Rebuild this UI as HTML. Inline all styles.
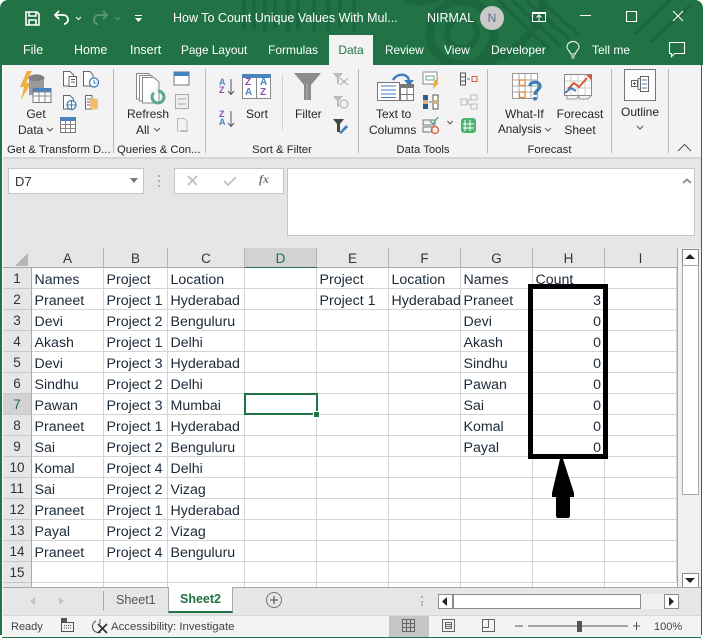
<!DOCTYPE html>
<html><head><meta charset="utf-8">
<style>
html,body{margin:0;padding:0;background:#fff}
#w{position:relative;width:703px;height:640px;overflow:hidden;font-family:"Liberation Sans",sans-serif;color:#262626;background:#fff}
#w>div,#w>svg,#w>table{position:absolute}
.t{white-space:nowrap;font-size:12px;line-height:16px}
.c{text-align:center}
.g{font-size:11.300px;top:142px}
.tab{color:#fff;font-size:12px;top:42px;line-height:16px;white-space:nowrap}
.h{top:248px;height:19px;line-height:21px;font-size:13.500px;text-align:center;color:#333;background:#e6e6e6;border-right:1px solid #b4b4b4;box-sizing:content-box}
.rn{left:3px;width:28px;height:20px;line-height:22px;text-align:center;font-size:13.500px;color:#333;background:#e6e6e6;border-bottom:1px solid #c8c8c8;border-right:1px solid #a8a8a8}
table{border-collapse:separate;border-spacing:0;table-layout:fixed;font-size:14.200px;color:#1c2a38}
td{height:21px;box-sizing:border-box;vertical-align:top;padding:4px 0 0 2.500px;border-right:1px solid #d4d4d4;border-bottom:1px solid #d4d4d4;white-space:nowrap;overflow:hidden;line-height:16px}
td.r{text-align:right;padding:4px 3px 0 0}
</style></head><body>
<div id="w">
<!-- title bar -->
<div style="left:0;top:0;width:703px;height:66px;background:#217346;border-radius:8px 8px 0 0"></div>
<svg style="left:230px;top:0" width="473" height="66" viewBox="0 0 473 66" fill="none" stroke="#1d6740">
<g stroke-width="4"><path d="M14 0V30M24 0V30M35 0V32M45 0V28M58 0V32M68 0V30M84 0L84 32M98 0V30M110 0V26M124 0V32"/></g>
<path d="M172 0a24 14 0 0 0 38 0" fill="#1d6740" stroke="none"/>
<circle cx="232" cy="33" r="15" stroke-width="6"/><circle cx="232" cy="33" r="32" stroke-width="9"/>
<path d="M222 66C262 66 304 50 314 0" stroke-width="8"/>
<path d="M268 0L320 50M282 0L330 46M296 0L340 40M310 0L350 36M405 34L440 0M420 42L460 6" stroke-width="4"/>
</svg>
<svg style="left:25px;top:11px" width="15" height="15" viewBox="0 0 15 15" fill="none" stroke="#fff" stroke-width="1.600"><path d="M1 1H12L14 3V14H1ZM4 1V5H11V1M4 14V9H11V14"/></svg>
<svg style="left:53px;top:10px" width="30" height="16" viewBox="0 0 30 16" fill="none" stroke="#fff" stroke-width="1.800"><path d="M6 1L2 5L6 9M2 5H10C14 5 15 8 15 10C15 12 13 14 11 14"/><path d="M23 7L25.500 9.500L28 7" stroke-width="1"/></svg>
<svg style="left:92px;top:10px" width="30" height="16" viewBox="0 0 30 16" fill="none" stroke="#5b9a78" stroke-width="1.800"><path d="M11 1L15 5L11 9M15 5H7C3 5 2 8 2 10C2 12 4 14 6 14"/><path d="M23 7L25.500 9.500L28 7" stroke-width="1"/></svg>
<svg style="left:134px;top:14px" width="10" height="10" viewBox="0 0 10 10" fill="#fff"><rect x="1" y="1" width="7" height="1"/><path d="M1 4H8L4.500 8Z"/></svg>
<div class="t" style="left:173px;top:10px;color:#fff;font-size:12.500px">How To Count Unique Values With Mul...</div>
<div class="t" style="left:427px;top:10px;color:#fff;font-size:12.500px">NIRMAL</div>
<div class="c" style="left:480px;top:6px;width:24px;height:24px;border-radius:12px;background:#c9c9c9;color:#5d6a8a;font-size:12px;line-height:24px">N</div>
<svg style="left:531px;top:10px" width="16" height="14" viewBox="0 0 16 14" fill="none" stroke="#fff"><path d="M1.500 2.500H14.500V11.500H1.500ZM1.500 3.500H14.500M8 11V5.500M5.500 7.500L8 5L10.500 7.500"/></svg>
<svg style="left:580px;top:8px" width="115" height="16" viewBox="0 0 115 16" fill="none" stroke="#fff" stroke-width="1.100"><path d="M0 7.500H11M46.500 3.500H56.500V13.500H46.500ZM93 3L103 13M103 3L93 13"/></svg>
<!-- tabs -->
<div class="tab" style="left:23px;font-size:12.500px">File</div>
<div class="tab" style="left:74px;font-size:12.500px">Home</div>
<div class="tab" style="left:130px;font-size:12.500px">Insert</div>
<div class="tab" style="left:181px;font-size:11.800px">Page Layout</div>
<div class="tab" style="left:268px">Formulas</div>
<div class="c" style="left:329px;top:35px;width:44px;height:31px;background:#f3f3f3;color:#217346;font-size:12px;line-height:31px">Data</div>
<div class="tab" style="left:385px;font-size:11.800px">Review</div>
<div class="tab" style="left:444px">View</div>
<div class="tab" style="left:491px">Developer</div>
<svg style="left:566px;top:41px" width="14" height="19" viewBox="0 0 14 19" fill="none" stroke="#fff"><path d="M4.500 13C4.500 10 1 9 1 6A6 5.500 0 0 1 13 6C13 9 9.500 10 9.500 13ZM5 15H9M5.500 17H8.500"/></svg>
<div class="tab" style="left:592px">Tell me</div>
<svg style="left:668px;top:41px" width="18" height="18" viewBox="0 0 18 18" fill="none" stroke="#fff" stroke-width="1.100"><path d="M1.500 1.500H16.500V12.500H6.500L3.500 15.500V12.500H1.500Z"/></svg>
<!-- ribbon -->
<div style="left:3px;top:65px;width:698px;height:92px;background:#f3f3f3;border-bottom:2px solid #d6d6d6"></div>
<div style="left:3px;top:159px;width:698px;height:89px;background:#e6e6e6"></div>
<!-- ribbon separators -->
<div style="left:113px;top:69px;width:1px;height:84px;background:#b8b8b8"></div>
<div style="left:205px;top:69px;width:1px;height:84px;background:#b8b8b8"></div>
<div style="left:282px;top:75px;width:1px;height:55px;background:#d0d0d0"></div>
<div style="left:358px;top:69px;width:1px;height:84px;background:#b8b8b8"></div>
<div style="left:487px;top:69px;width:1px;height:84px;background:#b8b8b8"></div>
<div style="left:611px;top:69px;width:1px;height:84px;background:#b8b8b8"></div>
<div style="left:668px;top:69px;width:1px;height:84px;background:#b8b8b8"></div>
<!-- Get data icons -->
<svg style="left:18px;top:69px" width="62" height="66" viewBox="0 0 62 66">
<path d="M9 2H14L8 14H13L3 31L6 18H2Z" fill="#f0b040"/>
<path d="M11 9C11 4 26 4 26 9V26H11Z" fill="#9a9a9a"/><ellipse cx="18.500" cy="9" rx="8" ry="3" fill="#808080"/>
<rect x="15" y="19.500" width="18" height="14" fill="#fff" stroke="#777"/><rect x="15" y="19" width="18" height="3.500" fill="#4a82bd"/>
<path d="M15 27H33M15 23H33M21 23V33M27 23V33" stroke="#888" fill="none"/>
<g transform="translate(42,48)"><rect x=".5" y=".5" width="15" height="15" fill="#fff" stroke="#777"/><rect width="16" height="4" fill="#4a82bd"/><path d="M0 7.500H15M0 11.500H15M5.500 4V15M10.500 4V15" stroke="#888" fill="none"/></g>
</svg>
<svg style="left:61px;top:70px" width="50" height="42" viewBox="0 0 50 42" fill="none" stroke="#666">
<path d="M2.500 1.500H9L12.500 5V16H2.500Z" fill="#fff"/><path d="M8 6.500H15.500V16.500H8ZM10 9.500H14M10 12H14" fill="#fff"/>
<path d="M22.500 1.500H29L32 5V16H22.500Z" fill="#fff"/><circle cx="33" cy="12.500" r="4.500" fill="#fff" stroke="#3d7fbd" stroke-width="1.300"/><path d="M33 10V13H35.500" stroke="#3d7fbd"/>
<path d="M2.500 25.500H9L12.500 29V39H2.500Z" fill="#fff"/><circle cx="10.500" cy="35" r="4.500" fill="#fff" stroke="#3d7fbd" stroke-width="1.300"/><path d="M6 35H15M10.500 31V39" stroke="#3d7fbd"/>
<path d="M24.500 25.500H31V39H24.500ZM26 29H30M26 32H30M26 35H30" fill="#fff"/><path d="M29 30C29 28 37 28 37 30V38C37 40 29 40 29 38Z" fill="#efc070" stroke="none"/>
</svg>
<div class="t c" style="left:18px;top:106px;width:36px">Get</div>
<div class="t" style="left:18px;top:122px">Data</div>
<svg style="left:46px;top:127px" width="8" height="6" fill="none" stroke="#555"><path d="M1 1L4 4L7 1"/></svg>
<div class="t g" style="left:7px">Get &amp; Transform D...</div>
<!-- Refresh -->
<svg style="left:134px;top:71px" width="60" height="70" viewBox="0 0 60 70" fill="none" stroke="#888">
<path d="M2.500 2.500H15V28H2.500Z" fill="#fff"/><path d="M5.500 4.500H18V30H5.500Z" fill="#fff"/><path d="M8.500 6.500H20L25 11V32H8.500Z" fill="#fff"/>
<circle cx="24" cy="26" r="6" stroke="#5aa88a" stroke-width="3"/><path d="M16 20L24 14V24Z" fill="#f3f3f3" stroke="none"/>
<rect x="40" y="1" width="15" height="13" fill="#fff" stroke="#777"/><rect x="40" y="1" width="15" height="4" fill="#4a82bd" stroke="none"/>
<rect x="41.500" y="23.500" width="13" height="14" fill="#eee" stroke="#aaa"/><path d="M44 28H52M44 33H52" stroke="#aaa"/>
<path d="M43.500 47.500H50L53 50V60H43.500Z" stroke="#bbb"/><path d="M47 60H54" stroke="#bbb" stroke-width="2"/>
</svg>
<div class="t c" style="left:125px;top:106px;width:46px">Refresh</div>
<div class="t" style="left:136px;top:122px">All</div>
<svg style="left:153px;top:127px" width="8" height="6" fill="none" stroke="#555"><path d="M1 1L4 4L7 1"/></svg>
<div class="t g" style="left:117px">Queries &amp; Con...</div>
<!-- Sort -->
<div class="t" style="left:219px;top:78px;font-size:9px;line-height:8px;font-weight:bold;color:#4a82bd">A<br><span style="color:#8a4fb0">Z</span></div>
<div class="t" style="left:219px;top:110px;font-size:9px;line-height:8px;font-weight:bold;color:#8a4fb0">Z<br><span style="color:#4a82bd">A</span></div>
<svg style="left:227px;top:79px" width="8" height="48" fill="none" stroke="#555"><path d="M4 0V15M1 12L4 15.500L7 12M4 32V47M1 44L4 47.500L7 44"/></svg>
<svg style="left:242px;top:74px" width="29" height="25" viewBox="0 0 29 25"><rect x=".5" y=".5" width="28" height="24" fill="#fff" stroke="#888"/><rect width="29" height="4" fill="#4a82bd"/><path d="M14.500 4V25" stroke="#888"/></svg>
<div class="t" style="left:245px;top:78px;font-size:10px;line-height:10px;font-weight:bold;color:#8a4fb0">Z<br><span style="color:#4a82bd">A</span></div>
<div class="t" style="left:260px;top:78px;font-size:10px;line-height:10px;font-weight:bold;color:#4a82bd">A<br><span style="color:#8a4fb0">Z</span></div>
<div class="t" style="left:246px;top:106px">Sort</div>
<svg style="left:293px;top:72px" width="30" height="29" viewBox="0 0 30 29"><path d="M1 1H28L18 13V28H11V13Z" fill="#8c8c8c"/><path d="M14 12V28" stroke="#b5b5b5" fill="none"/></svg>
<div class="t" style="left:295px;top:106px">Filter</div>
<svg style="left:332px;top:70px" width="18" height="66" viewBox="0 0 18 66" fill="none"><path d="M1 3H11L7 8V14H5V8Z" fill="#bbb"/><path d="M8 8L16 15M16 8L8 15" stroke="#aaa"/><path d="M1 26H11L7 31V37H5V31Z" fill="#bbb"/><circle cx="12" cy="34" r="4" stroke="#aaa"/><path d="M1 49H12L8 54V62H5V54Z" fill="#444"/><path d="M7 63L14 55L16 57L9 64Z" fill="#3d7fbd"/></svg>
<div class="t c g" style="left:206px;width:152px">Sort &amp; Filter</div>
<!-- Data tools -->
<svg style="left:377px;top:72px" width="46" height="30" viewBox="0 0 46 30" fill="none">
<path d="M16 8C20 1 30 1 32 8" stroke="#3d7fbd" stroke-width="2.500"/><path d="M27 8H37L32 14Z" fill="#3d7fbd"/>
<rect x=".5" y="10.500" width="22" height="18" fill="#fff" stroke="#777"/><path d="M4 14H19M4 18H19M4 22H19M4 25.500H19" stroke="#3d7fbd"/>
<rect x="23.500" y="12.500" width="13" height="16" fill="#fff" stroke="#777"/><rect x="23" y="12" width="14" height="4" fill="#777"/><path d="M24 22.500H36M30 16V28" stroke="#777"/>
</svg>
<div class="t" style="left:376px;top:106px">Text to</div>
<div class="t" style="left:369px;top:122px">Columns</div>
<svg style="left:422px;top:71px" width="66" height="66" viewBox="0 0 66 66" fill="none">
<rect x="1" y="1" width="14" height="12" stroke="#888" fill="#fff"/><rect x="4" y="5" width="8" height="4" stroke="#5aa88a"/><path d="M12 10L17 6L14 12L17 12L11 18Z" fill="#f0b040"/>
<rect x="1" y="24" width="5" height="14" fill="#2e5d8e"/><rect x="11" y="24" width="5" height="14" stroke="#555" fill="#fff"/><rect x="1" y="29" width="5" height="4" fill="#dcb274"/><rect x="11" y="29" width="5" height="4" fill="#dcb274"/><path d="M7 31H10" stroke="#3d7fbd"/>
<rect x="1" y="49" width="12" height="5" stroke="#777"/><rect x="1" y="56" width="9" height="5" stroke="#777"/><path d="M8 50L11 53L16 46" stroke="#5aa88a" stroke-width="1.500"/><circle cx="13" cy="59" r="3.500" stroke="#d9583a" stroke-width="1.300"/>
<path d="M25.500 50L28 53L30.500 50" stroke="#555"/>
<rect x="38.500" y="2" width="5" height="12" stroke="#555"/><path d="M39 6H43M39 10H43" stroke="#555"/><path d="M45 8H48" stroke="#3d7fbd"/><rect x="50" y="5.500" width="5" height="5" stroke="#d9583a"/>
<rect x="39" y="28" width="6" height="6" stroke="#bbb"/><rect x="49" y="24" width="6" height="5" stroke="#bbb"/><rect x="49" y="33" width="6" height="5" stroke="#bbb"/><path d="M45 31L49 27M45 31L49 35" stroke="#bbb"/>
<rect x="39" y="47" width="15" height="15" rx="3" fill="#4db36e"/><path d="M43 49V60M48 49V60M41 53H52M41 57H52" stroke="#fff"/>
</svg>
<div class="t c g" style="left:359px;width:128px">Data Tools</div>
<!-- Forecast -->
<svg style="left:512px;top:73px" width="32" height="32" viewBox="0 0 32 32" fill="none">
<rect x=".5" y=".5" width="25" height="25" stroke="#999" fill="#fff"/><path d="M7 1V25M13 1V25M19 1V25M1 7H25M1 13H25M1 19H25" stroke="#aaa"/>
<rect x="7.500" y="7" width="5.500" height="5.500" stroke="#e08a3c" stroke-width="1.300" fill="#fff"/><rect x="7.500" y="19" width="5.500" height="5.500" stroke="#e08a3c" stroke-width="1.300" fill="#fff"/>
<path d="M18 13C18 8 28 8 28 13C28 17 23 17 23 22" stroke="#3d7fbd" stroke-width="3.200"/><rect x="21.300" y="24" width="3.500" height="3.500" fill="#3d7fbd"/>
</svg>
<svg style="left:564px;top:74px" width="30" height="26" viewBox="0 0 30 26" fill="none">
<rect x=".5" y=".5" width="27" height="21" stroke="#888" fill="#fff"/><path d="M7 1V21M14 1V21M21 1V21M1 7H27M1 14H27" stroke="#ccc"/>
<path d="M2 16L8 10L13 14L21 5" stroke="#d9583a" stroke-width="2" transform="translate(2,-1)"/><path d="M1 19L7 14L12 17" stroke="#3d7fbd" stroke-width="2"/><path d="M22 1H28V7Z" fill="#d9583a"/>
<path d="M3 22V25H12L15 22M15 22V25H24L27 22" stroke="#999"/>
</svg>
<div class="t" style="left:505px;top:106px">What-If</div>
<div class="t" style="left:498px;top:122px;font-size:11.700px">Analysis</div>
<svg style="left:544px;top:127px" width="8" height="6" fill="none" stroke="#555"><path d="M1 1L4 4L7 1"/></svg>
<div class="t c" style="left:554px;top:106px;width:52px">Forecast</div>
<div class="t c" style="left:554px;top:122px;width:52px">Sheet</div>
<div class="t c g" style="left:488px;width:123px">Forecast</div>
<!-- Outline -->
<div style="left:624px;top:69px;width:30px;height:30px;background:#fcfcfc;border:1px solid #777"></div>
<svg style="left:631px;top:76px" width="18" height="16" viewBox="0 0 18 16" fill="none" stroke="#666"><rect x=".5" y="4.500" width="6" height="6"/><path d="M2 7.500H5M3.500 6V9M7 2.500H9M7 13.500H9M7 2.500V13.500"/><rect x="9.500" y=".5" width="8" height="15" stroke="#666"/><path d="M11 4H16M11 8H16M11 12H16" stroke="#3d7fbd"/></svg>
<div class="t c" style="left:612px;top:104px;width:56px">Outline</div>
<svg style="left:636px;top:125px" width="8" height="6" fill="none" stroke="#555"><path d="M1 1L4 4L7 1"/></svg>
<svg style="left:677px;top:143px" width="16" height="10" fill="none" stroke="#555"><path d="M1 8L7.500 1.500L14 8"/></svg>
<!-- formula bar -->
<div style="left:8px;top:168px;width:134px;height:24px;background:#fff;border:1px solid #c6c6c6;font-size:13px;line-height:25px;text-indent:6px;color:#333">D7</div>
<svg style="left:129px;top:178px" width="10" height="6"><path d="M1 0H9L5 5Z" fill="#777"/></svg>
<div style="left:158px;top:175px;width:2px;height:2px;background:#b0b0b0;box-shadow:0 5px #b0b0b0,0 10px #b0b0b0"></div>
<div style="left:174px;top:168px;width:108px;height:24px;background:#fff;border:1px solid #c6c6c6"></div>
<svg style="left:186px;top:175px" width="50" height="12" fill="none" stroke="#c0c0c0" stroke-width="1.800"><path d="M2 1L11 10M11 1L2 10M38 6L42 10L50 2"/></svg>
<div style="left:259px;top:172px;font:italic bold 12px 'Liberation Serif',serif;color:#777">fx</div>
<div style="left:287px;top:168px;width:406px;height:66px;background:#fff;border:1px solid #c6c6c6"></div>
<svg style="left:682px;top:178px" width="10" height="6" fill="none" stroke="#888" stroke-width="1.800"><path d="M1 5L5 1.500L9 5"/></svg>
<!-- grid -->
<div style="left:3px;top:248px;width:678px;height:340px;background:#fff"></div>
<div style="left:3px;top:247px;width:674px;height:20px;background:#e6e6e6;border-bottom:1px solid #a8a8a8;box-sizing:content-box"></div>
<svg style="left:15px;top:253px" width="14" height="14"><path d="M13 0V13H0Z" fill="#b5b5b5"/></svg>
<div class="h" style="left:32px;width:71px">A</div>
<div class="h" style="left:104px;width:63px">B</div>
<div class="h" style="left:168px;width:76px">C</div>
<div class="h" style="left:245px;width:71px;background:#d2d2d2;color:#1d6f42;border-bottom:1px solid #217346">D</div>
<div class="h" style="left:317px;width:71px">E</div>
<div class="h" style="left:389px;width:71px">F</div>
<div class="h" style="left:461px;width:71px">G</div>
<div class="h" style="left:533px;width:71px">H</div>
<div class="h" style="left:605px;width:71px;border-right:0">I</div>
<div class="rn" style="top:268px">1</div><div class="rn" style="top:289px">2</div><div class="rn" style="top:310px">3</div><div class="rn" style="top:331px">4</div><div class="rn" style="top:352px">5</div><div class="rn" style="top:373px">6</div>
<div class="rn" style="top:394px;background:#d2d2d2;color:#1d6f42">7</div>
<div class="rn" style="top:415px">8</div><div class="rn" style="top:436px">9</div><div class="rn" style="top:457px">10</div><div class="rn" style="top:478px">11</div><div class="rn" style="top:499px">12</div><div class="rn" style="top:520px">13</div><div class="rn" style="top:541px">14</div><div class="rn" style="top:562px">15</div>
<div style="left:3px;top:583px;width:28px;height:4px;background:#e6e6e6;border-right:1px solid #a8a8a8"></div>
<table style="left:32px;top:268px;width:645px">
<colgroup><col style="width:72px"><col style="width:64px"><col style="width:77px"><col style="width:72px"><col style="width:72px"><col style="width:72px"><col style="width:72px"><col style="width:72px"><col style="width:72px"></colgroup>
<tr><td>Names</td><td>Project</td><td>Location</td><td></td><td>Project</td><td>Location</td><td>Names</td><td>Count</td><td></td></tr>
<tr><td>Praneet</td><td>Project 1</td><td>Hyderabad</td><td></td><td>Project 1</td><td>Hyderabad</td><td>Praneet</td><td class="r">3</td><td></td></tr>
<tr><td>Devi</td><td>Project 2</td><td>Benguluru</td><td></td><td></td><td></td><td>Devi</td><td class="r">0</td><td></td></tr>
<tr><td>Akash</td><td>Project 1</td><td>Delhi</td><td></td><td></td><td></td><td>Akash</td><td class="r">0</td><td></td></tr>
<tr><td>Devi</td><td>Project 3</td><td>Hyderabad</td><td></td><td></td><td></td><td>Sindhu</td><td class="r">0</td><td></td></tr>
<tr><td>Sindhu</td><td>Project 2</td><td>Delhi</td><td></td><td></td><td></td><td>Pawan</td><td class="r">0</td><td></td></tr>
<tr><td>Pawan</td><td>Project 3</td><td>Mumbai</td><td></td><td></td><td></td><td>Sai</td><td class="r">0</td><td></td></tr>
<tr><td>Praneet</td><td>Project 1</td><td>Hyderabad</td><td></td><td></td><td></td><td>Komal</td><td class="r">0</td><td></td></tr>
<tr><td>Sai</td><td>Project 2</td><td>Benguluru</td><td></td><td></td><td></td><td>Payal</td><td class="r">0</td><td></td></tr>
<tr><td>Komal</td><td>Project 4</td><td>Delhi</td><td></td><td></td><td></td><td></td><td></td><td></td></tr>
<tr><td>Sai</td><td>Project 2</td><td>Vizag</td><td></td><td></td><td></td><td></td><td></td><td></td></tr>
<tr><td>Praneet</td><td>Project 1</td><td>Hyderabad</td><td></td><td></td><td></td><td></td><td></td><td></td></tr>
<tr><td>Payal</td><td>Project 2</td><td>Vizag</td><td></td><td></td><td></td><td></td><td></td><td></td></tr>
<tr><td>Praneet</td><td>Project 4</td><td>Benguluru</td><td></td><td></td><td></td><td></td><td></td><td></td></tr>
<tr><td></td><td></td><td></td><td></td><td></td><td></td><td></td><td></td><td></td></tr>
</table>
<svg style="left:32px;top:583px" width="645" height="5"><path d="M71.500 0V5M135.500 0V5M212.500 0V5M284.500 0V5M356.500 0V5M428.500 0V5M500.500 0V5M572.500 0V5" stroke="#d4d4d4"/></svg>
<!-- selection -->
<div style="left:244px;top:393px;width:70px;height:18px;border:2px solid #217346;box-sizing:content-box"></div>
<div style="left:313px;top:411px;width:5px;height:5px;background:#217346;border:1px solid #fff;box-sizing:content-box"></div>
<!-- annotation -->
<div style="left:528px;top:284px;width:80px;height:175px;border:5px solid #000;box-sizing:border-box"></div>
<svg style="left:550px;top:457px" width="26" height="62" viewBox="0 0 26 62"><path d="M10 2H13L24 36V40H20V59L19 61H7L6 59V40H2V36Z" fill="#000"/></svg>
<!-- scrollbar -->
<div style="left:677px;top:248px;width:24px;height:340px;background:#f0f0f0"></div>
<div style="left:677px;top:248px;width:1px;height:340px;background:#a8a8a8"></div>
<div style="left:682px;top:249px;width:15px;height:15px;background:#fff;border:1px solid #8c8c8c"></div>
<svg style="left:685px;top:254px" width="10" height="6"><path d="M5 0L10 5H0Z" fill="#222"/></svg>
<div style="left:682px;top:265px;width:15px;height:228px;background:#fff;border:1px solid #a8a8a8"></div>
<div style="left:682px;top:573px;width:15px;height:14px;background:#fff;border:1px solid #8c8c8c"></div>
<svg style="left:685px;top:578px" width="10" height="6"><path d="M0 0H10L5 5Z" fill="#222"/></svg>
<!-- sheet tabs -->
<div style="left:3px;top:587px;width:698px;height:28px;background:#e6e6e6;border-top:1px solid #a8a8a8;box-sizing:border-box"></div>
<svg style="left:29px;top:596px" width="36" height="10"><path d="M6 1V9L1 5ZM30 1V9L35 5Z" fill="#c4c4c4"/></svg>
<div style="left:103px;top:591px;width:1px;height:20px;background:#a8a8a8"></div>
<div class="t" style="left:116px;top:592px;color:#555;font-size:12.500px">Sheet1</div>
<div class="c" style="left:168px;top:587px;width:63px;height:24px;background:#fff;border-left:1px solid #a8a8a8;border-right:1px solid #a8a8a8;border-bottom:2px solid #217346;color:#217346;font-weight:bold;font-size:12.500px;line-height:25px;box-sizing:content-box">Sheet2</div>
<svg style="left:265px;top:591px" width="18" height="18" fill="none" stroke="#777"><circle cx="9" cy="9" r="7.500"/><path d="M5 9H13M9 5V13" stroke-width="1.500"/></svg>
<div style="left:421px;top:596px;width:2px;height:2px;background:#b0b0b0;box-shadow:0 5px #b0b0b0,0 8px #b0b0b0"></div>
<div style="left:438px;top:594px;width:241px;height:15px;background:#f0f0f0"></div>
<div style="left:438px;top:594px;width:13px;height:13px;background:#fff;border:1px solid #8c8c8c"></div>
<svg style="left:442px;top:597px" width="6" height="10"><path d="M5 0V9L0 4.500Z" fill="#222"/></svg>
<div style="left:453px;top:594px;width:186px;height:13px;background:#fff;border:1px solid #8c8c8c"></div>
<div style="left:664px;top:594px;width:13px;height:13px;background:#fff;border:1px solid #8c8c8c"></div>
<svg style="left:669px;top:597px" width="6" height="10"><path d="M0 0V9L5 4.500Z" fill="#222"/></svg>
<!-- status bar -->
<div style="left:3px;top:615px;width:698px;height:22px;background:#f3f3f3;border-top:1px solid #d6d6d6;box-sizing:border-box"></div>
<div class="t" style="left:11px;top:619px;font-size:11px;color:#444">Ready</div>
<svg style="left:61px;top:618px" width="14" height="15" fill="none" stroke="#555"><rect x=".5" y="4.500" width="12" height="9"/><rect x="0" y="0" width="6" height="5" fill="#555" stroke="none"/><path d="M3 7.500H11M3 10H11" stroke-dasharray="1 1"/></svg>
<svg style="left:91px;top:618px" width="18" height="16" fill="none" stroke="#555"><path d="M9 1V6M5 3A6 6 0 1 0 10 14" /><path d="M7 6L16 15M16 6L7 15" stroke="#333" stroke-width="1.700"/></svg>
<div class="t" style="left:111px;top:619px;font-size:11.400px;color:#444">Accessibility: Investigate</div>
<div style="left:389px;top:616px;width:40px;height:21px;background:#c6c6c6"></div>
<svg style="left:402px;top:619px" width="14" height="14" fill="none" stroke="#666"><path d="M.5 .5H12.500V12.500H.5ZM4.500 .5V12.500M8.500 .5V12.500M.5 4.500H12.500M.5 8.500H12.500"/></svg>
<svg style="left:442px;top:619px" width="14" height="14" fill="none" stroke="#666"><path d="M.5 .5H12.500V12.500H.5Z"/><path d="M3.500 3.500H9.500V9.500H3.500ZM4 5.500H9M4 7.500H9"/></svg>
<svg style="left:482px;top:619px" width="14" height="14" fill="none" stroke="#666"><path d="M.5 .5H12.500V12.500H.5ZM.5 8.500H6.500V.5"/></svg>
<svg style="left:515px;top:618px" width="125" height="16"><path d="M0 8H8M13 8H113M118 8H125M121.500 4V12" stroke="#555" fill="none"/><rect x="62" y="3" width="5" height="11" fill="#555"/></svg>
<div class="t" style="left:654px;top:619px;font-size:11px;color:#444">100%</div>
<!-- window border -->
<div style="left:0;top:65px;width:3px;height:570px;background:#fff;border-left:2px solid #217346;box-sizing:border-box"></div>
<div style="left:701px;top:65px;width:2px;height:570px;background:#fff;border-left:1px solid #217346;box-sizing:border-box"></div>
<div style="left:2px;top:637px;width:699px;height:1px;background:#217346"></div>
</div>
</body></html>
